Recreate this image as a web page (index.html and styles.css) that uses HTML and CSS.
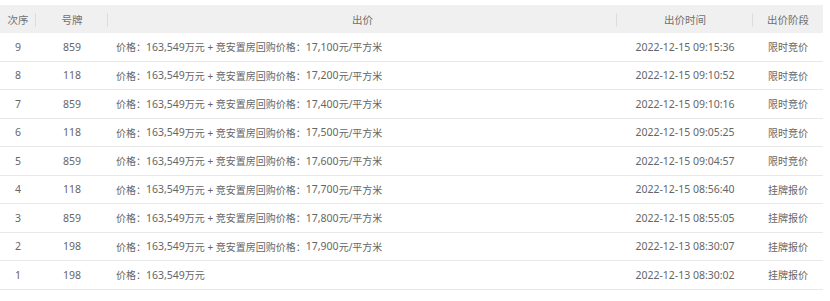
FILE: index.html
```html
<!DOCTYPE html>
<html lang="zh-CN">
<head>
<meta charset="utf-8">
<title>出价记录</title>
<link rel="stylesheet" href="styles.css">
</head>
<body>
<div class="bid-table">
  <div class="row head">
    <div class="cell c-seq"><span class="h-label">次序</span></div>
    <div class="cell c-no"><span class="h-label">号牌</span></div>
    <div class="cell c-bid center"><span class="h-label">出价</span></div>
    <div class="cell c-time"><span class="h-label">出价时间</span></div>
    <div class="cell c-stage last"><span class="h-label">出价阶段</span></div>
  </div>
  <div class="row"><div class="cell c-seq">9</div><div class="cell c-no">859</div><div class="cell c-bid">价格：<span class="num">163,549</span>万元 + 竞安置房回购价格：<span class="num">17,100</span>元/平方米</div><div class="cell c-time">2022-12-15 09:15:36</div><div class="cell c-stage">限时竞价</div></div>
  <div class="row"><div class="cell c-seq">8</div><div class="cell c-no">118</div><div class="cell c-bid">价格：<span class="num">163,549</span>万元 + 竞安置房回购价格：<span class="num">17,200</span>元/平方米</div><div class="cell c-time">2022-12-15 09:10:52</div><div class="cell c-stage">限时竞价</div></div>
  <div class="row"><div class="cell c-seq">7</div><div class="cell c-no">859</div><div class="cell c-bid">价格：<span class="num">163,549</span>万元 + 竞安置房回购价格：<span class="num">17,400</span>元/平方米</div><div class="cell c-time">2022-12-15 09:10:16</div><div class="cell c-stage">限时竞价</div></div>
  <div class="row"><div class="cell c-seq">6</div><div class="cell c-no">118</div><div class="cell c-bid">价格：<span class="num">163,549</span>万元 + 竞安置房回购价格：<span class="num">17,500</span>元/平方米</div><div class="cell c-time">2022-12-15 09:05:25</div><div class="cell c-stage">限时竞价</div></div>
  <div class="row"><div class="cell c-seq">5</div><div class="cell c-no">859</div><div class="cell c-bid">价格：<span class="num">163,549</span>万元 + 竞安置房回购价格：<span class="num">17,600</span>元/平方米</div><div class="cell c-time">2022-12-15 09:04:57</div><div class="cell c-stage">限时竞价</div></div>
  <div class="row"><div class="cell c-seq">4</div><div class="cell c-no">118</div><div class="cell c-bid">价格：<span class="num">163,549</span>万元 + 竞安置房回购价格：<span class="num">17,700</span>元/平方米</div><div class="cell c-time">2022-12-15 08:56:40</div><div class="cell c-stage">挂牌报价</div></div>
  <div class="row"><div class="cell c-seq">3</div><div class="cell c-no">859</div><div class="cell c-bid">价格：<span class="num">163,549</span>万元 + 竞安置房回购价格：<span class="num">17,800</span>元/平方米</div><div class="cell c-time">2022-12-15 08:55:05</div><div class="cell c-stage">挂牌报价</div></div>
  <div class="row"><div class="cell c-seq">2</div><div class="cell c-no">198</div><div class="cell c-bid">价格：<span class="num">163,549</span>万元 + 竞安置房回购价格：<span class="num">17,900</span>元/平方米</div><div class="cell c-time">2022-12-13 08:30:07</div><div class="cell c-stage">挂牌报价</div></div>
  <div class="row"><div class="cell c-seq">1</div><div class="cell c-no">198</div><div class="cell c-bid">价格：<span class="num">163,549</span>万元</div><div class="cell c-time">2022-12-13 08:30:02</div><div class="cell c-stage">挂牌报价</div></div>
</div>
</body>
</html>
```

FILE: styles.css
```css
html, body {
  margin: 0;
  padding: 0;
  background: #ffffff;
}

body {
  padding-top: 5px;
  font-family: "Noto Sans", "Noto Sans CJK SC", sans-serif;
  font-size: 10px;
  color: #666666;
}

.bid-table {
  width: 823px;
}

.row {
  display: grid;
  grid-template-columns: 36px 72px 509px 136px 70px;
  height: 28.5px;
  box-sizing: border-box;
  border-bottom: 1px solid #e8e8e8;
}

.row.head {
  height: 28px;
  background: #f0f0f0;
  border-bottom: none;
}

.cell {
  display: flex;
  align-items: center;
  justify-content: center;
  white-space: nowrap;
  position: relative;
}

.c-seq,
.c-no,
.c-time,
.num {
  font-size: 10.5px;
}

.head .cell {
  font-size: 10.5px;
}

.c-bid {
  justify-content: flex-start;
  padding-left: 8px;
}

.c-bid.center {
  justify-content: center;
  padding-left: 0;
}

.head .cell::after {
  content: "";
  position: absolute;
  right: 0;
  top: 8px;
  height: 14px;
  width: 1px;
  background: #dddddd;
}

.head .cell.last::after {
  display: none;
}

.h-label {
  color: #707070;
}
```
